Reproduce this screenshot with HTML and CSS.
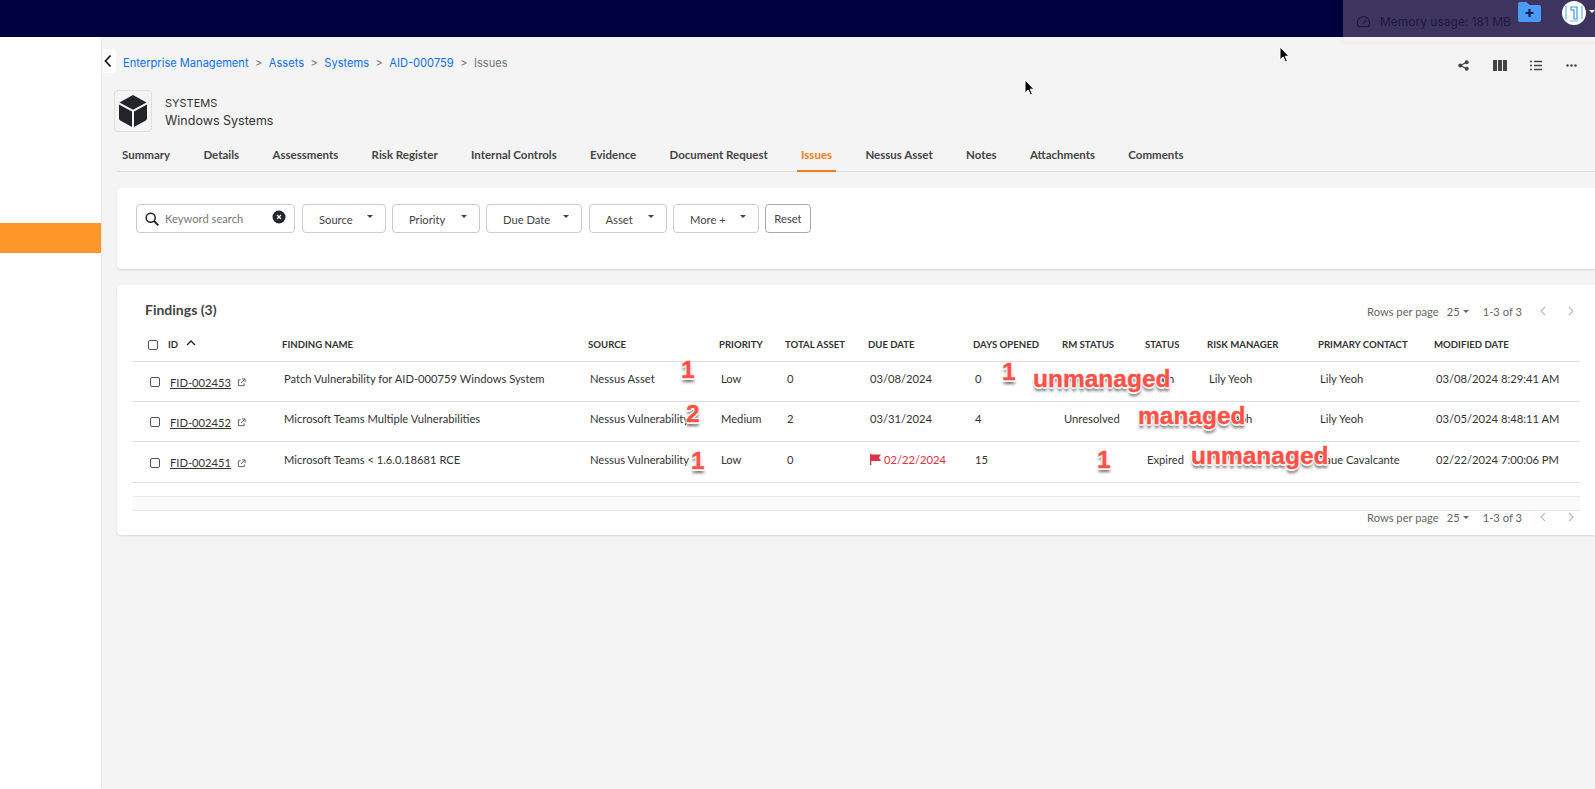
FILE: index.html
```html
<!DOCTYPE html>
<html lang="en">
<head>
<meta charset="utf-8">
<title>Issues</title>
<link rel="stylesheet" href="styles.css">
</head>
<body>
<header class="topbar">
  <div class="memory">
    <svg class="gauge" viewBox="0 0 16 14" width="15" height="13"><path d="M2.6 12.6h10.6a7 7 0 0 0 1.3-4.2A6.6 6.6 0 0 0 8 1.6a6.6 6.6 0 0 0-6.6 6.800a7 7 0 0 0 1.200 4.200zM7 9.500l4-4" fill="none" stroke="#1d1840" stroke-width="1.300"/></svg>
    <span>Memory usage: 181 MB</span>
  </div>
  <svg class="folder" viewBox="0 0 23 20" width="23" height="20"><path d="M2 0h6.500l3 3H21a2 2 0 0 1 2 2v13a2 2 0 0 1-2 2H2a2 2 0 0 1-2-2V2a2 2 0 0 1 2-2z" fill="#4a9bf6"/><path d="M11.500 7v8M7.500 11h8" stroke="#10204a" stroke-width="2.200"/></svg>
  <div class="avatar">
    <svg viewBox="0 0 24 24" width="24" height="24"><circle cx="12" cy="12" r="12" fill="#fff"/><path d="M4 5v13M20 5v13" stroke="#9fd2f2" stroke-width="2"/><path d="M9 6h6v12h-3V9H9z" fill="#fff" stroke="#3d9ad8" stroke-width="1.200"/><path d="M8 20h8" stroke="#9fd2f2" stroke-width="1.500"/></svg>
  </div>
  <span class="avatar-caret"></span>
</header>
<div class="shell">
  <aside class="sidebar"><div class="side-active"></div></aside>
  <main class="content">
    <div class="crumb-row">
      <button class="back" type="button" aria-label="Back"><svg viewBox="0 0 8 14" width="8" height="14"><path d="M6.500 1.500 1.500 7l5 5.500" fill="none" stroke="#111" stroke-width="1.700"/></svg></button>
      <nav class="crumbs">
        <a>Enterprise Management</a><i>&gt;</i><a>Assets</a><i>&gt;</i><a>Systems</a><i>&gt;</i><a>AID-000759</a><i>&gt;</i><span>Issues</span>
      </nav>
      <div class="tools">
        <svg class="t-share" viewBox="0 0 12 12" width="11" height="11"><path d="M9.500 2.500 2.500 6l7 3.500" fill="none" stroke="#444" stroke-width="1.200"/><circle cx="9.500" cy="2.500" r="2.200" fill="#444"/><circle cx="2.500" cy="6" r="2.200" fill="#444"/><circle cx="9.500" cy="9.500" r="2.200" fill="#444"/></svg>
        <svg class="t-cols" viewBox="0 0 14 11" width="14" height="11"><path d="M0 0h4v11H0zM5 0h4v11H5zM10 0h4v11h-4z" fill="#444"/></svg>
        <svg viewBox="0 0 12 11" width="12" height="11"><path d="M4 1.500h8M4 5.500h8M4 9.500h8" stroke="#444" stroke-width="1.300"/><circle cx="1" cy="1.500" r="1" fill="#444"/><circle cx="1" cy="5.500" r="1" fill="#444"/><circle cx="1" cy="9.500" r="1" fill="#444"/></svg>
        <svg viewBox="0 0 11 3" width="11" height="3"><circle cx="1.500" cy="1.500" r="1.200" fill="#444"/><circle cx="5.500" cy="1.500" r="1.200" fill="#444"/><circle cx="9.500" cy="1.500" r="1.200" fill="#444"/></svg>
      </div>
    </div>

    <div class="title-row">
      <div class="cube-box">
        <svg viewBox="0 0 28 32" width="28" height="32"><path d="M14 0 27.500 7.600 14 14.700.5 7.600z" fill="#212529"/><path d="M0 9.600 13 16.500V32L1.200 25.400A2 2 0 0 1 0 23.600z" fill="#212529"/><path d="M28 9.600 15 16.500V32l11.800-6.600a2 2 0 0 0 1.200-1.800z" fill="#212529"/></svg>
      </div>
      <div class="title-text">
        <div class="eyebrow">SYSTEMS</div>
        <div class="title">Windows Systems</div>
      </div>
    </div>

    <nav class="tabs">
      <a>Summary</a><a>Details</a><a>Assessments</a><a>Risk Register</a><a>Internal Controls</a><a>Evidence</a><a>Document Request</a><a class="tab-on">Issues</a><a>Nessus Asset</a><a>Notes</a><a>Attachments</a><a>Comments</a>
    </nav>

    <section class="card filters">
      <div class="search">
        <svg viewBox="0 0 14 14" width="14" height="14"><circle cx="5.700" cy="5.700" r="4.500" fill="none" stroke="#222" stroke-width="1.500"/><path d="m9 9 4.300 4.300" stroke="#222" stroke-width="1.800"/></svg>
        <span class="placeholder">Keyword search</span>
        <svg class="clear" viewBox="0 0 14 14" width="14" height="14"><circle cx="7" cy="7" r="6.500" fill="#22252a"/><path d="m5 5 4 4M9 5 5 9" stroke="#fff" stroke-width="1.200"/></svg>
      </div>
      <button class="drop w-source" type="button">Source<b></b></button>
      <button class="drop w-priority" type="button">Priority<b></b></button>
      <button class="drop w-due" type="button">Due Date<b></b></button>
      <button class="drop w-asset" type="button">Asset<b></b></button>
      <button class="drop w-more" type="button">More +<b></b></button>
      <button class="reset" type="button">Reset</button>
    </section>

    <section class="card findings">
      <div class="findings-head">
        <h2>Findings (3)</h2>
        <div class="pager"><span class="rpp">Rows per page</span><span class="num">25</span><b></b><span class="range">1-3 of 3</span><svg viewBox="0 0 6 10" width="6" height="10"><path d="M5 1 1 5l4 4" fill="none" stroke="#bbb" stroke-width="1.100"/></svg><svg class="next" viewBox="0 0 6 10" width="6" height="10"><path d="m1 1 4 4-4 4" fill="none" stroke="#bbb" stroke-width="1.100"/></svg></div>
      </div>

      <div class="grid ghead">
        <div class="idcell"><span class="box"></span><span>ID</span><svg viewBox="0 0 10 6" width="10" height="6"><path d="m1 5 4-4 4 4" fill="none" stroke="#222" stroke-width="1.300"/></svg></div>
        <div>FINDING NAME</div><div>SOURCE</div><div>PRIORITY</div><div>TOTAL ASSET</div><div>DUE DATE</div><div>DAYS OPENED</div><div>RM STATUS</div><div>STATUS</div><div>RISK MANAGER</div><div>PRIMARY CONTACT</div><div>MODIFIED DATE</div>
      </div>

      <div class="grid row">
        <div class="idcell"><span class="box"></span><a>FID-002453</a><svg viewBox="0 0 10 10" width="9" height="9"><path d="M4 2H1.500v6.500H8V6M5.500 1H9v3.500M9 1 4.500 5.500" fill="none" stroke="#555" stroke-width="1"/></svg></div>
        <div>Patch Vulnerability for AID-000759 Windows System</div><div>Nessus Asset</div><div>Low</div><div>0</div><div>03/08/2024</div><div>0</div><div></div><div>Open</div><div>Lily Yeoh</div><div>Lily Yeoh</div><div>03/08/2024 8:29:41 AM</div>
      </div>
      <div class="grid row">
        <div class="idcell"><span class="box"></span><a>FID-002452</a><svg viewBox="0 0 10 10" width="9" height="9"><path d="M4 2H1.500v6.500H8V6M5.500 1H9v3.500M9 1 4.500 5.500" fill="none" stroke="#555" stroke-width="1"/></svg></div>
        <div>Microsoft Teams Multiple Vulnerabilities</div><div>Nessus Vulnerability</div><div>Medium</div><div>2</div><div>03/31/2024</div><div>4</div><div>Unresolved</div><div></div><div>Lily Yeoh</div><div>Lily Yeoh</div><div>03/05/2024 8:48:11 AM</div>
      </div>
      <div class="grid row row-tall">
        <div class="idcell"><span class="box"></span><a>FID-002451</a><svg viewBox="0 0 10 10" width="9" height="9"><path d="M4 2H1.500v6.500H8V6M5.500 1H9v3.500M9 1 4.500 5.500" fill="none" stroke="#555" stroke-width="1"/></svg></div>
        <div>Microsoft Teams &lt; 1.6.0.18681 RCE</div><div>Nessus Vulnerability</div><div>Low</div><div>0</div><div class="overdue"><svg viewBox="0 0 11 11" width="11" height="11"><path d="M0 0h1.300v11H0zM1.300.6H11L8.800 3.800 11 7H1.300z" fill="#e0304a"/></svg>02/22/2024</div><div>15</div><div></div><div>Expired</div><div></div><div>Taue Cavalcante</div><div>02/22/2024 7:00:06 PM</div>
      </div>

      <div class="hscroll"></div>
      <div class="pager pager-foot"><span class="rpp">Rows per page</span><span class="num">25</span><b></b><span class="range">1-3 of 3</span><svg viewBox="0 0 6 10" width="6" height="10"><path d="M5 1 1 5l4 4" fill="none" stroke="#bbb" stroke-width="1.100"/></svg><svg class="next" viewBox="0 0 6 10" width="6" height="10"><path d="m1 1 4 4-4 4" fill="none" stroke="#bbb" stroke-width="1.100"/></svg></div>

      <span class="note n1">1</span>
      <span class="note n2">2</span>
      <span class="note n3">1</span>
      <span class="note n4">1</span>
      <span class="note n5">1</span>
      <span class="note m1">unmanaged</span>
      <span class="note m2">managed</span>
      <span class="note m3">unmanaged</span>
    </section>
  </main>
</div>
<svg class="cursor c1" viewBox="0 0 12 18" width="12" height="18"><path d="M1 1v13l3.200-3 2.200 5 2-1-2.200-4.800H10z" fill="#000" stroke="#fff" stroke-width="1"/></svg>
<svg class="cursor c2" viewBox="0 0 12 18" width="12" height="18"><path d="M1 1v13l3.200-3 2.200 5 2-1-2.200-4.800H10z" fill="#000" stroke="#fff" stroke-width="1"/></svg>
</body>
</html>
```
FILE: styles.css
```css
* { box-sizing: border-box; }
html, body { margin: 0; height: 789px; overflow: hidden; }
body { background: #f4f4f4; font-family: Lato, "Open Sans", sans-serif; color: #333; position: relative; }

.topbar { height: 37px; background: #01003e; display: flex; justify-content: flex-end; align-items: flex-start; position: relative; }
.memory { position: absolute; top: 0; left: 1343px; right: 0; height: 37px; background: #3d3560; display: flex; align-items: center; padding: 6px 0 0 13px; gap: 9px; color: #1d1840; font: 12px Inter, sans-serif; box-shadow: 0 5px 0 #f6f2f2, 0 6px 4px rgba(0,0,0,.05); }
.folder { position: relative; margin: 2px 21px 0 0; }
.avatar { position: relative; width: 24px; height: 24px; margin: 1px 3px 0 0; }
.avatar svg { display: block; }
.avatar-caret { position: relative; width: 0; height: 0; margin: 10px 0 0 0; border: 3.500px solid transparent; border-top-color: #fff; border-bottom: 0; }

.shell { display: flex; height: 752px; }
.sidebar { width: 102px; flex: none; background: #fff; border-right: 1px solid #e8e8e8; padding-top: 186px; }
.side-active { height: 30px; background: #ff962a; }
.content { flex: 1; min-width: 0; padding-left: 15px; }

.crumb-row { height: 53px; display: flex; align-items: flex-start; padding: 12px 0 0; margin-left: -14px; }
.back { width: 13px; height: 24px; padding: 0 0 0 1px; border: 0; background: #fff; border-radius: 0 4px 4px 0; display: flex; align-items: center; flex: none; }
.crumbs { margin-left: 7px; height: 27px; display: flex; align-items: center; font: 11.100px Inter, sans-serif; color: #6c757d; }
.crumbs a { color: #0d6efd; }
.crumbs i { font-style: normal; font-size: 11px; margin: 0 6.500px; color: #6c757d; }
.tools { margin-left: auto; display: flex; align-items: center; gap: 24px; height: 33px; padding-right: 18px; }
.t-cols { margin-right: -1px; }

.title-row { height: 42px; display: flex; align-items: center; margin-left: -3px; }
.cube-box { width: 38px; height: 42px; background: #f4f4f4; border: 1px solid #dedede; border-radius: 4px; display: flex; align-items: center; justify-content: center; }
.title-text { margin-left: 13px; font-family: Inter, sans-serif; color: #333; padding-top: 3px; }
.eyebrow { font-size: 11px; line-height: 16px; }
.title { font-size: 12.500px; line-height: 19px; }

.tabs { height: 40px; display: flex; align-items: flex-end; border-bottom: 1px solid #dcdcdc; gap: 33.300px; padding-left: 5px; font-size: 11.500px; font-weight: 700; color: #444; }
.tabs a { padding: 0 0 8px; height: 25px; line-height: 17px; display: block; }
.tab-on { color: #f47b20; border-bottom: 2px solid #f47b20; margin: 0 -4px -1px; padding: 0 4px 7px !important; height: 26px !important; }

.card { background: #fff; box-shadow: 0 1px 2px rgba(0,0,0,.12); border-radius: 4px 0 0 4px; }
.filters { margin-top: 16px; height: 81px; display: flex; align-items: flex-start; padding: 16px 0 0 19px; gap: 6.500px; }
.search { width: 159px; height: 29px; margin-right: .5px; background: #fff; border: 1px solid #ccc; border-radius: 4px; display: flex; align-items: center; padding: 0 8px 0 8px; }
.placeholder { margin-left: 6px; font-size: 11.200px; color: #777; }
.clear { margin-left: auto; margin-top: -3px; }
.drop, .reset { height: 29px; background: #fff; border: 1px solid #ccc; border-radius: 4px; font: 11.200px Lato, sans-serif; color: #444; padding: 0; }
.drop { display: flex; align-items: center; padding: 1px 0 0 16px; position: relative; }
.drop b { position: absolute; right: 12px; top: 10px; border: 3px solid transparent; border-top-color: #444; border-bottom: 0; }
.w-source { width: 83.500px; }
.w-priority { width: 87.500px; }
.w-due { width: 96px; }
.w-asset { width: 78px; }
.w-more { width: 85.500px; }
.reset { width: 46px; border-color: #aaa; }

.findings { margin-top: 16px; height: 250px; padding: 0 15px 0 16px; position: relative; }
.findings-head { height: 47px; display: flex; justify-content: space-between; align-items: flex-start; padding-top: 15px; }
h2 { margin: 0 0 0 12px; font-size: 14px; line-height: 20px; font-weight: 700; color: #444; }
.pager { display: flex; align-items: center; height: 24px; font-size: 11.200px; color: #666; margin-top: -1px; padding-right: 6px; }
.pager .num { margin-left: 8px; }
.pager b { margin-left: 3px; border: 3px solid transparent; border-top-color: #666; border-bottom: 0; }
.pager .range { margin: 0 18px 0 14px; }
.pager .next { margin-left: 22px; }
.pager-foot { justify-content: flex-end; margin-top: 0; height: 12px; }

.grid { display: grid; grid-template-columns: 149px 306px 131px 66px 83px 105px 89px 83px 62px 111px 116px 145px; }
.grid > div { white-space: nowrap; min-width: 0; }
.ghead { height: 30px; align-items: center; font-size: 9.600px; font-weight: 700; color: #333; padding-bottom: 4px; border-bottom: 1px solid #dddde6; }
.ghead .idcell { padding-left: 15px; display: flex; align-items: center; }
.ghead .idcell span:nth-child(2) { margin-left: 10px; }
.ghead .idcell svg { margin-left: 8px; margin-top: -3px; }
.box { width: 10px; height: 10px; border: 1px solid #555; border-radius: 2px; display: block; background: #fff; flex: none; }
.row { height: 40px; align-items: center; font-size: 11.200px; color: #333; border-bottom: 1px solid #dddde6; }
.row-tall { height: 41px; }
.row > div { padding-left: 2px; overflow: hidden; margin-top: -6px; }
.row > .idcell { padding-left: 17px; display: flex; align-items: center; margin-top: 1px; overflow: visible; }
.idcell a { margin-left: 10px; text-decoration: underline; color: #333; }
.row .idcell svg { margin-left: 6px; margin-top: 1px; }
.overdue { color: #e0304a; display: flex; align-items: center; gap: 3px; }
.hscroll { height: 15px; margin-top: 13px; background: #fafafa; border-top: 1px solid #e8e8e8; border-bottom: 1px solid #e8e8e8; }

.note { position: absolute; font: 700 24.500px/28px "Liberation Sans", Arial, sans-serif; color: #ff5147; -webkit-text-stroke: .4px #ff5147; text-shadow: 1px 0 0 #fff, -1px 0 0 #fff, 0 1px 0 #fff, 0 -1px 0 #fff, 1px 1px 0 #fff, -1px 1px 0 #fff, 1px -1px 0 #fff, -1px -1px 0 #fff, 0 2px 0 #fff, 0 4px 3px rgba(0,0,0,.6); }
.n1 { left: 564px; top: 71px; }
.n2 { left: 569px; top: 115px; }
.n3 { left: 574px; top: 162px; }
.n4 { left: 885px; top: 73px; }
.n5 { left: 980px; top: 161px; }
.m1 { left: 916px; top: 80px; }
.m2 { left: 1021px; top: 117px; }
.m3 { left: 1074px; top: 157px; }

.cursor { position: absolute; }
.c1 { left: 1279px; top: 46px; }
.c2 { left: 1024px; top: 79px; }
```
